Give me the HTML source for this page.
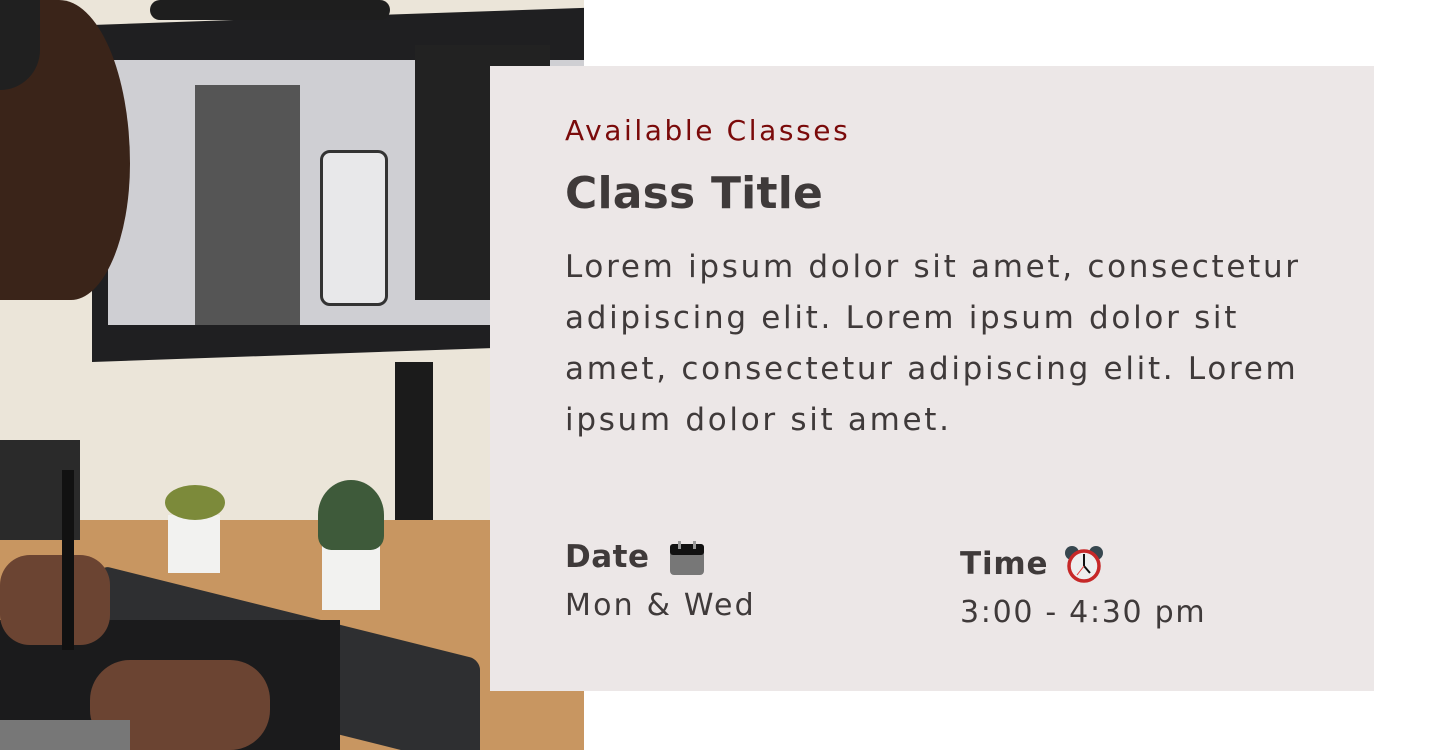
<!DOCTYPE html>
<html><head><style>
html,body{margin:0;padding:0;width:1440px;height:750px;background:#fff;overflow:hidden;position:relative;font-family:"DejaVu Sans","Liberation Sans",sans-serif}
.a{position:absolute}
.t{position:absolute;white-space:nowrap;color:#3f3a3a}
</style></head><body>
<div class="a" style="left:0;top:0;width:584px;height:750px;overflow:hidden;background:#ebe5d9">
 <div class="a" style="left:92px;top:25px;width:492px;height:337px;background:#1f1f21;transform:skewY(-2deg);transform-origin:left top"></div>
 <div class="a" style="left:150px;top:0;width:240px;height:20px;background:#1e1e1e;border-radius:10px"></div>
 <div class="a" style="left:108px;top:60px;width:476px;height:265px;background:#cfcfd3"></div>
 <div class="a" style="left:195px;top:85px;width:105px;height:240px;background:#555"></div>
 <div class="a" style="left:320px;top:150px;width:62px;height:150px;background:#e8e8ea;border:3px solid #333;border-radius:10px"></div>
 <div class="a" style="left:415px;top:45px;width:135px;height:255px;background:#222"></div>
 <div class="a" style="left:395px;top:362px;width:38px;height:230px;background:#1b1b1b"></div>
 <div class="a" style="left:0;top:520px;width:584px;height:230px;background:#c89661"></div>
 <div class="a" style="left:0;top:440px;width:80px;height:100px;background:#2a2a2a"></div>
 <div class="a" style="left:168px;top:515px;width:52px;height:58px;background:#f2f2f0"></div>
 <div class="a" style="left:165px;top:485px;width:60px;height:35px;background:#7c8a3a;border-radius:50%"></div>
 <div class="a" style="left:322px;top:545px;width:58px;height:65px;background:#f2f2f0"></div>
 <div class="a" style="left:318px;top:480px;width:66px;height:70px;background:#3e5a3a;border-radius:50% 50% 20% 20%"></div>
 <div class="a" style="left:100px;top:565px;width:380px;height:110px;background:#2e2f31;transform:skewY(14deg);transform-origin:left top;border-radius:10px"></div>
 <div class="a" style="left:0;top:620px;width:340px;height:130px;background:#1b1b1c"></div>
 <div class="a" style="left:0;top:0;width:130px;height:300px;background:#3a2419;border-radius:0 60% 50% 0"></div>
 <div class="a" style="left:0;top:0;width:40px;height:90px;background:#202020;border-radius:0 0 40px 0"></div>
 <div class="a" style="left:0;top:555px;width:110px;height:90px;background:#6b4432;border-radius:30px"></div>
 <div class="a" style="left:90px;top:660px;width:180px;height:90px;background:#6b4432;border-radius:40px"></div>
 <div class="a" style="left:62px;top:470px;width:12px;height:180px;background:#111"></div>
 <div class="a" style="left:0;top:720px;width:130px;height:30px;background:#777"></div>
</div>
<div class="a" style="left:490px;top:66px;width:884px;height:625px;background:#ece7e7"></div>
<div class="t" style="left:565px;top:114px;font-size:28px;color:#7a0a0a;letter-spacing:2.6px">Available Classes</div>
<div class="t" style="left:565px;top:168px;font-size:44px;font-weight:bold;letter-spacing:0.2px">Class Title</div>
<div class="t" style="left:565px;top:242px;font-size:31px;line-height:51px;letter-spacing:2.7px">Lorem ipsum dolor sit amet, consectetur<br>adipiscing elit. Lorem ipsum dolor sit<br>amet, consectetur adipiscing elit. Lorem<br>ipsum dolor sit amet.</div>
<div class="t" style="left:565px;top:539px;font-size:31px;font-weight:bold;letter-spacing:0.5px">Date</div>
<svg class="a" style="left:670px;top:541px" width="35" height="35" viewBox="0 0 35 35"><rect x="0" y="3" width="34" height="31" rx="4" fill="#777"/><rect x="0" y="3" width="34" height="11" rx="3" fill="#111"/><rect x="8" y="0" width="3" height="8" fill="#999"/><rect x="23" y="0" width="3" height="8" fill="#999"/></svg>
<div class="t" style="left:565px;top:588px;font-size:30px;letter-spacing:2.2px">Mon &amp; Wed</div>
<div class="t" style="left:960px;top:546px;font-size:31px;font-weight:bold;letter-spacing:0.8px">Time</div>
<svg class="a" style="left:1064px;top:545px" width="40" height="40" viewBox="0 0 40 40"><circle cx="8" cy="8" r="7" fill="#37474f"/><circle cx="32" cy="8" r="7" fill="#37474f"/><circle cx="20" cy="21" r="15" fill="#eee" stroke="#c62828" stroke-width="3.5"/><path d="M20 21V9M20 21l6 7" stroke="#111" stroke-width="2"/><path d="M20 21l-7 9" stroke="#e53935" stroke-width="1"/></svg>
<div class="t" style="left:960px;top:595px;font-size:30px;letter-spacing:1.7px">3:00 - 4:30 pm</div>
</body></html>
